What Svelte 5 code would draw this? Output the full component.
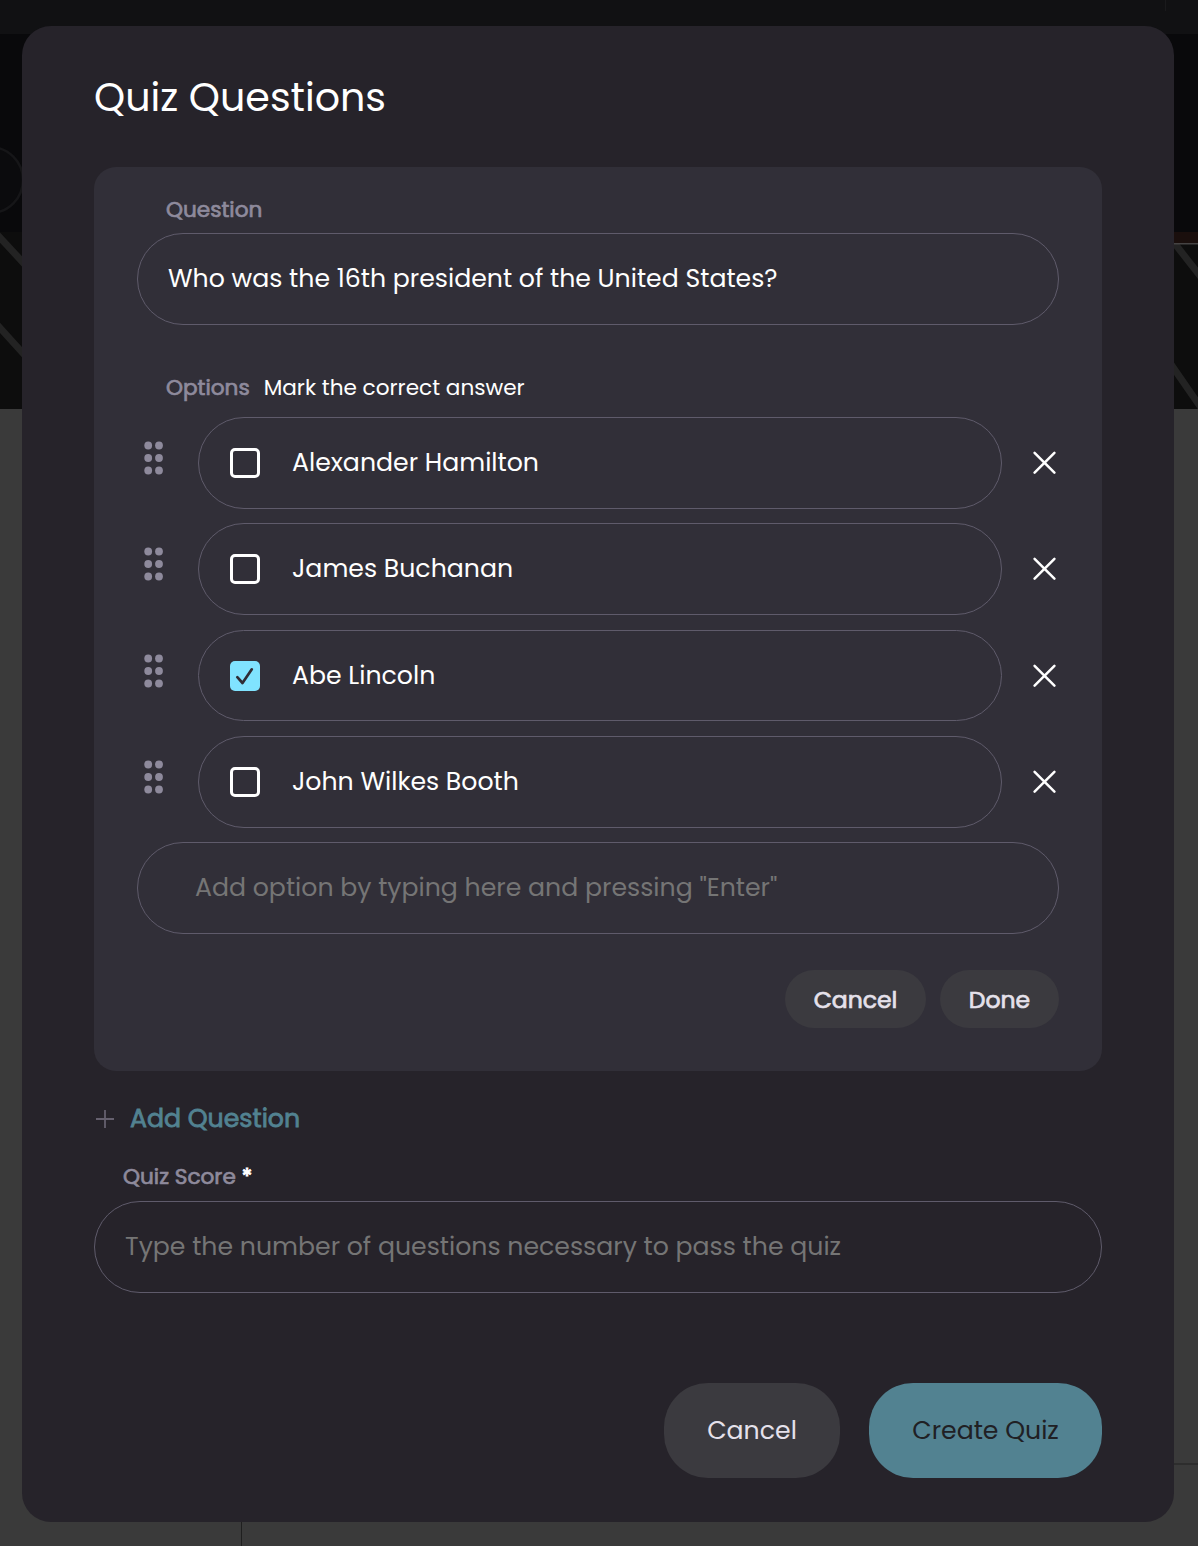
<script>
  let options = [
    { id: 1, name: 'Alexander Hamilton', correct: false },
    { id: 2, name: 'James Buchanan', correct: false },
    { id: 3, name: 'Abe Lincoln', correct: true },
    { id: 4, name: 'John Wilkes Booth', correct: false }
  ]

  const dots = [7.5, 20, 32.5]

  function toggle(id) {
    options = options.map((o) => (o.id === id ? { ...o, correct: !o.correct } : o))
  }

  function remove(id) {
    options = options.filter((o) => o.id !== id)
  }
</script>

<div class="page">
  <svg class="backdrop" viewBox="0 0 1198 1546" aria-hidden="true">
    <rect width="1198" height="1546" fill="#3a3a3a" />
    <rect width="1198" height="34" fill="#111113" />
    <rect y="34" width="1198" height="198" fill="#09090b" />
    <rect x="1165" width="1" height="11" fill="#1a1a1c" />
    <rect y="232" width="1198" height="177" fill="#0d0d0d" />
    <path d="M-8 229L30 270M-8 319L30 361M1172 240L1204 281M1168 360L1206 415" stroke="#232323" stroke-width="7" />
    <rect y="34" width="22" height="198" fill="#09090b" />
    <circle cx="-10" cy="180" r="33" fill="#0b0b0d" stroke="#161618" stroke-width="2.5" />
    <rect x="1174" y="232" width="24" height="11" fill="#1a0f0d" />
    <rect x="1174" y="243" width="24" height="1.5" fill="#454343" />
    <rect y="409" width="1198" height="1137" fill="#3a3a3a" />
    <rect x="1174" y="1463" width="24" height="2" fill="#2d2d2d" />
    <rect x="241" y="1522" width="1" height="24" fill="#1f1f1f" />
  </svg>

  <div class="modal">
    <h1>Quiz Questions</h1>

    <div class="card">
      <div class="label"><span>Question</span></div>
      <div class="field"><span>Who was the 16th president of the United States?</span></div>

      <div class="label options-label">
        <span>Options</span>
        <span class="hint">Mark the correct answer</span>
      </div>

      <div class="options">
        {#each options as option (option.id)}
          <div class="option">
            <svg class="handle" width="20" height="40" viewBox="0 0 20 40">
              {#each dots as y}
                <circle cx="4.2" cy={y} r="3.9" />
                <circle cx="15" cy={y} r="3.9" />
              {/each}
            </svg>
            <div class="field option-field">
              <button class="checkbox" class:checked={option.correct} aria-label="Correct answer" on:click={() => toggle(option.id)}>
                {#if option.correct}
                  <svg width="30" height="30" viewBox="0 0 30 30">
                    <path d="M7.3 16.2L12.5 22L21.8 8.3" />
                  </svg>
                {/if}
              </button>
              <span>{option.name}</span>
            </div>
            <button class="remove" aria-label="Remove option" on:click={() => remove(option.id)}>
              <svg width="24" height="24" viewBox="0 0 24 24">
                <path d="M2.6 1.8L22.4 21.6M22.4 1.8L2.6 21.6" />
              </svg>
            </button>
          </div>
        {/each}
        <div class="field add-option"><span class="placeholder">Add option by typing here and pressing "Enter"</span></div>
      </div>

      <div class="card-actions">
        <button class="small-btn small-cancel"><span>Cancel</span></button>
        <button class="small-btn small-done"><span>Done</span></button>
      </div>
    </div>

    <div class="add-question">
      <svg width="20" height="20" viewBox="0 0 20 20"><path d="M1 10H19M10 1V19" /></svg>
      <span>Add Question</span>
    </div>

    <div class="label score-label"><span>Quiz Score</span> <span class="star">*</span></div>
    <div class="field"><span class="placeholder">Type the number of questions necessary to pass the quiz</span></div>

    <div class="actions">
      <button class="btn cancel"><span>Cancel</span></button>
      <button class="btn create"><span>Create Quiz</span></button>
    </div>
  </div>
</div>

<style>
  :global(body) {
    margin: 0;
    background: #3a3a3a;
  }

  .page {
    position: relative;
    box-sizing: border-box;
    width: 1198px;
    height: 1546px;
    padding: 26px 24px 24px 22px;
    overflow: hidden;
    font-family: Poppins, Inter, sans-serif;
    font-size: 25.2px;
    font-weight: 400;
    color: #fff;
  }

  .page span,
  h1 {
    white-space: nowrap;
  }

  .backdrop {
    position: absolute;
    inset: 0;
    width: 1198px;
    height: 1546px;
  }

  button {
    padding: 0;
    border: none;
    background: none;
    font: inherit;
    cursor: pointer;
  }

  .modal {
    position: relative;
    box-sizing: border-box;
    display: flex;
    flex-direction: column;
    width: 1152px;
    height: 1496px;
    padding: 41px 72px 44px;
    border-radius: 29px;
    background: #26232a;
  }

  h1 {
    margin: 0;
    height: 60px;
    line-height: 60px;
    font-size: 39.6px;
    font-weight: 400;
  }

  .card {
    box-sizing: border-box;
    height: 904px;
    margin-top: 40px;
    padding: 27px 43px 0;
    border-radius: 22px;
    background: #312f38;
  }

  .label {
    display: flex;
    align-items: center;
    height: 30px;
    margin-bottom: 9px;
    padding-left: 29px;
    font-size: 21.6px;
    color: #8e8a9c;
    -webkit-text-stroke: 0.7px currentColor;
  }

  .field {
    box-sizing: border-box;
    display: flex;
    align-items: center;
    height: 92px;
    padding: 0 30px;
    border: 1px solid #5f5b6b;
    border-radius: 46px;
  }

  .options-label {
    gap: 14px;
    margin-top: 47px;
    margin-bottom: 15.1px;
  }

  .hint {
    color: #fff;
    -webkit-text-stroke: 0;
  }

  .options {
    display: flex;
    flex-direction: column;
    gap: 14.76px;
  }

  .option {
    display: flex;
    align-items: center;
  }

  .options .field {
    height: 91.6px;
  }

  .handle {
    margin: -10px 34px 0 7px;
    fill: #8e8a9c;
  }

  .option .option-field {
    width: 804px;
    gap: 32px;
    padding-left: 31px;
  }

  .checkbox {
    box-sizing: border-box;
    width: 30px;
    height: 30px;
    border: 3px solid #fff;
    border-radius: 5px;
  }

  .checkbox.checked {
    border: none;
    background: #80e3ff;
  }

  .checkbox svg {
    display: block;
    fill: none;
    stroke: #2f2c35;
    stroke-width: 2.7;
    stroke-linecap: round;
    stroke-linejoin: round;
  }

  .remove {
    width: 24px;
    height: 24px;
    margin-left: 30px;
  }

  .remove svg {
    display: block;
    stroke: #fff;
    stroke-width: 2.5;
    stroke-linecap: round;
  }

  .options .add-option {
    padding-left: 57px;
  }

  .placeholder {
    color: #757575;
  }

  .card-actions {
    display: flex;
    justify-content: flex-end;
    gap: 14px;
    margin-top: 35.9px;
  }

  .small-btn {
    height: 58px;
    padding-top: 1px;
    border-radius: 29px;
    background: #3b3a3f;
    color: #e5e1eb;
    font-size: 23.5px;
    -webkit-text-stroke: 0.7px currentColor;
  }

  .small-cancel {
    width: 141px;
  }

  .small-done {
    width: 119px;
  }

  .add-question {
    display: flex;
    align-items: center;
    gap: 15px;
    height: 36px;
    margin-top: 30px;
    padding-left: 1px;
    color: #528291;
    -webkit-text-stroke: 0.8px currentColor;
  }

  .add-question svg {
    stroke: #65606e;
    stroke-width: 1.8;
  }

  .score-label {
    gap: 6px;
    margin-top: 24px;
    margin-bottom: 10px;
  }

  .star {
    color: #fff;
    -webkit-text-stroke-width: 0.9px;
  }

  .actions {
    display: flex;
    justify-content: flex-end;
    gap: 29px;
    margin-top: 90px;
  }

  .btn {
    height: 95px;
    border-radius: 44px;
  }

  .cancel {
    width: 176px;
    background: #3b3a3f;
    color: #e5e1eb;
  }

  .create {
    width: 233px;
    background: #528291;
    color: #202024;
  }
</style>
